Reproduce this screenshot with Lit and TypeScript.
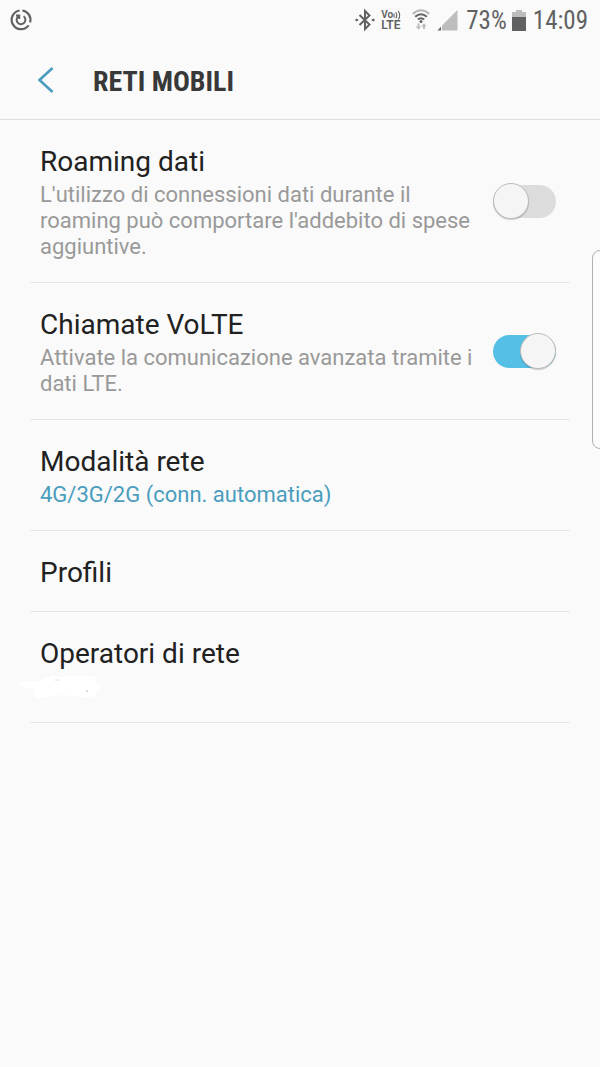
import { LitElement, html, css, svg, nothing } from "lit";
import { customElement, property } from "lit/decorators.js";

@customElement("status-bar")
class StatusBar extends LitElement {
  static styles = css`
    :host {
      display: flex;
      align-items: center;
      justify-content: space-between;
      height: 40px;
      padding: 0 12px 0 9px;
      color: #616161;
      font-family: "Roboto Condensed", "Liberation Sans Narrow", Roboto, sans-serif;
      font-size: 25px;
      line-height: 40px;
    }
    svg {
      display: block;
      flex: none;
    }
    .group {
      display: flex;
      align-items: center;
    }
    .text {
      padding-top: 2px;
    }
    .volte {
      display: flex;
      flex-direction: column;
      width: 22px;
      margin: 0 9px 0 6px;
      font-family: Roboto, sans-serif;
      font-size: 12px;
      font-weight: 600;
      line-height: 11px;
    }
    .voice {
      display: flex;
      align-items: center;
      font-size: 10px;
    }
    .wifi {
      margin-right: 7px;
    }
    .signal {
      margin-right: 8px;
    }
    .battery {
      margin: 0 7px 0 5px;
    }
  `;

  render() {
    return html`
      <svg width="24" height="24" viewBox="0 0 24 24" fill="none" stroke="#616161" stroke-width="2.2" aria-hidden="true">
        <path d="M10.6 2.5A9.4 9.4 0 1 0 19.6 17.4M21.1 14.4A9.4 9.4 0 0 0 13.4 2.5" />
        <path d="M14.6 8.2A4.4 4.4 0 1 1 9.2 8.4M7 7.4H10.2V11" stroke-width="2" />
      </svg>
      <div class="group">
        <svg width="20" height="24" viewBox="0 0 20 24" fill="none" stroke="#616161" stroke-width="2" aria-label="Bluetooth">
          <path d="M4.5 7L14.5 16.5L10 21V3L14.5 7.5L4.5 17" />
          <path d="M1 11L3.2 12L1 13ZM19 11L16.8 12L19 13Z" fill="#616161" stroke-width="1" />
        </svg>
        <div class="volte">
          <span class="voice">Vo<svg width="8" height="10" viewBox="0 0 8 10" fill="none" stroke="#616161" stroke-width="1.1" aria-hidden="true"><path d="M1 3.5V7.5M2.8 2.2Q4.6 5.2 2.8 8.2M5.2 1Q8.2 5.2 5.2 9.5" /></svg></span>
          <span>LTE</span>
        </div>
        <svg class="wifi" width="18" height="22" viewBox="0 0 18 22" fill="none" stroke-width="2" aria-label="Wi-Fi">
          <path d="M.8 5Q9-2.4 17.2 5" stroke="#b5b5b5" />
          <path d="M3.2 7.8Q9 2.6 14.8 7.8M5.9 10.6Q9 7.8 12.1 10.6" stroke="#616161" />
          <circle cx="9" cy="12.6" r="1.5" fill="#616161" />
          <path d="M6.5 14.5V19M12 20V16" stroke="#bdbdbd" />
          <path d="M3.7 17.5H9.3L6.5 20.8ZM9.2 17.5H14.8L12 14.2Z" fill="#bdbdbd" />
        </svg>
        <svg class="signal" width="21" height="21" viewBox="0 0 21 21" aria-label="Segnale">
          <path d="M20.5 0V20.5H5V15.5Z" fill="#bdbdbd" />
          <path d="M4 16.8V20.5H.5Z" fill="#616161" />
        </svg>
        <span class="text">73%</span>
        <svg class="battery" width="14" height="21" viewBox="0 0 14 21" aria-label="Batteria">
          <path d="M4 0H10V2H14V7H0V2H4Z" fill="#bdbdbd" />
          <path d="M0 7H14V21H0Z" fill="#616161" />
        </svg>
        <span class="text">14:09</span>
      </div>
    `;
  }
}

@customElement("setting-row")
class SettingRow extends LitElement {
  @property() label = "";
  @property() detail = "";
  @property() kind = "";
  @property({ type: Boolean }) on = false;

  static styles = css`
    :host {
      display: block;
      border-bottom: 1px solid #e6e6e6;
    }
    .row {
      box-sizing: border-box;
      display: flex;
      align-items: center;
      justify-content: space-between;
      gap: 20px;
      width: 100%;
      margin: 0;
      padding: 0 14px 0 10px;
      border: 0;
      background: none;
      font: inherit;
      text-align: left;
    }
    .text {
      display: flex;
      flex: 1;
      flex-direction: column;
      gap: 4px;
      padding: 25px 0 22px;
    }
    .label {
      color: #212121;
      font-size: 28px;
      line-height: 33px;
    }
    .detail {
      color: #999;
      font-size: 22px;
      line-height: 26px;
    }
    .value {
      color: #4a9dbd;
    }
    .blank {
      display: block;
      width: 84px;
      height: 26px;
      margin-left: -21px;
    }
    .switch {
      appearance: none;
      flex: none;
      display: flex;
      align-items: center;
      width: 63px;
      height: 33px;
      margin: 0;
      border-radius: 17px;
      background: #dcdcdc;
    }
    .switch::before {
      content: "";
      box-sizing: border-box;
      width: 36px;
      height: 36px;
      border: 1px solid #bdbdbd;
      border-radius: 50%;
      background: #f5f5f5;
      box-shadow: 0 1px 1px rgba(0, 0, 0, 0.2);
    }
    .switch:checked {
      justify-content: flex-end;
      background: #55c0e5;
    }
  `;

  private get detailText() {
    if (this.kind === "blank") {
      return html`<svg class="blank" viewBox="0 0 84 26" aria-hidden="true">
        ${svg`<path d="M0 9Q8 6 20 7Q30 1 42 3Q62 0 77 3Q74 8 83 11Q82 15 76 17L77 22Q66 25 56 22Q38 20 29 23Q20 26 15 22L16 15Q4 15 0 9Z" fill="#fff"/>
        <path d="M36 6H40" stroke="#ddd"/><circle cx="68" cy="17" r="1" fill="#ccc"/>`}
      </svg>`;
    }
    return this.detail
      ? html`<span class="detail ${this.kind === "value" ? "value" : ""}">${this.detail}</span>`
      : nothing;
  }

  render() {
    const text = html`<span class="text"><span class="label">${this.label}</span>${this.detailText}</span>`;
    return this.kind === "switch"
      ? html`<label class="row">${text}<input class="switch" type="checkbox" role="switch" .checked=${this.on} /></label>`
      : html`<button class="row" type="button">${text}</button>`;
  }
}

@customElement("app-root")
class AppRoot extends LitElement {
  static styles = css`
    :host {
      position: relative;
      display: block;
      min-height: 100vh;
      overflow: hidden;
      background: #fafafa;
      font-family: Roboto, sans-serif;
    }
    .header {
      display: flex;
      align-items: center;
      gap: 38px;
      height: 79px;
      padding: 0 37px;
      border-bottom: 1px solid #dedede;
    }
    .back {
      display: block;
      padding: 0;
      border: 0;
      background: none;
    }
    .back svg {
      display: block;
    }
    .title {
      margin: 0;
      padding-top: 4px;
      color: #383838;
      font-family: "Roboto Condensed", "Liberation Sans Narrow", Roboto, sans-serif;
      font-size: 28px;
      font-weight: 700;
      line-height: 34px;
    }
    .list {
      padding: 0 30px;
    }
    .edge {
      position: absolute;
      top: 250px;
      right: -10px;
      box-sizing: border-box;
      width: 18px;
      height: 199px;
      border: 1px solid #b0b0b0;
      border-radius: 8px;
      background: #fcfcfc;
    }
  `;

  render() {
    return html`
      <status-bar></status-bar>
      <header class="header">
        <button class="back" type="button" aria-label="Indietro">
          <svg width="18" height="28" viewBox="0 0 18 28" fill="none" stroke="#4a9dbd" stroke-width="2.6">
            <path d="M15.5 2L2.5 14L15.5 26" />
          </svg>
        </button>
        <h1 class="title">RETI MOBILI</h1>
      </header>
      <main class="list">
        <setting-row
          kind="switch"
          label="Roaming dati"
          detail="L'utilizzo di connessioni dati durante il roaming può comportare l'addebito di spese aggiuntive."
        ></setting-row>
        <setting-row
          kind="switch"
          on
          label="Chiamate VoLTE"
          detail="Attivate la comunicazione avanzata tramite i dati LTE."
        ></setting-row>
        <setting-row kind="value" label="Modalità rete" detail="4G/3G/2G (conn. automatica)"></setting-row>
        <setting-row label="Profili"></setting-row>
        <setting-row kind="blank" label="Operatori di rete"></setting-row>
      </main>
      <div class="edge"></div>
    `;
  }
}
